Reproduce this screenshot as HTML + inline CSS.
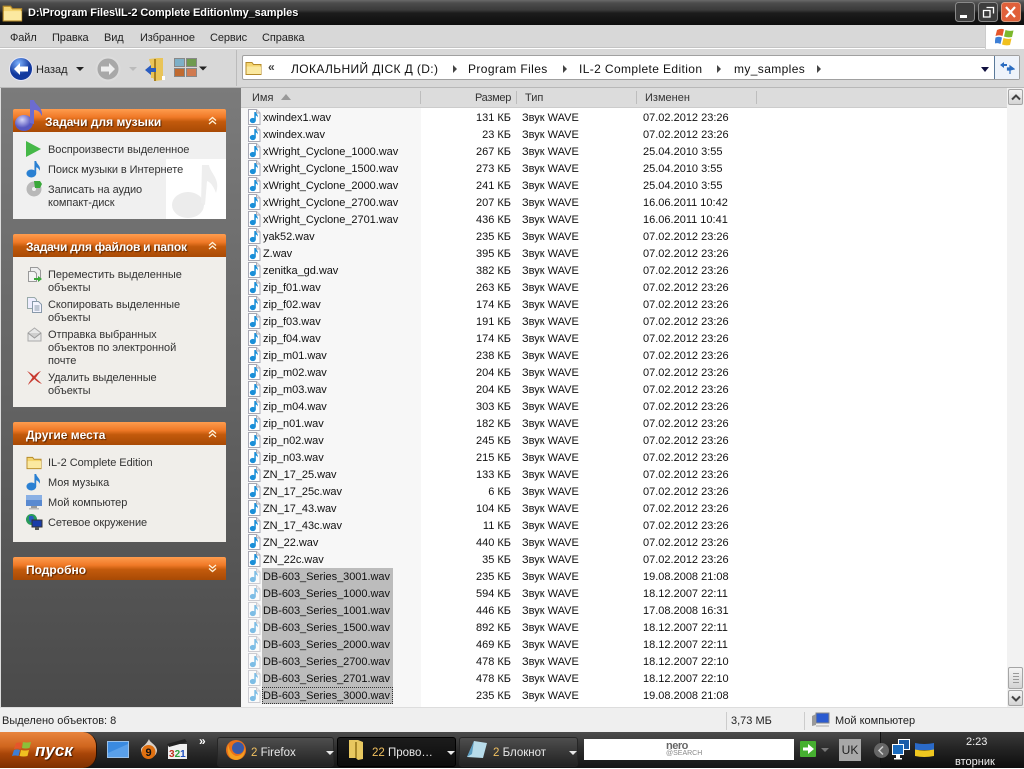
<!DOCTYPE html>
<html><head><meta charset="utf-8"><title>my_samples</title>
<style>
*{box-sizing:border-box}
html,body{margin:0;padding:0;width:1024px;height:768px;overflow:hidden;background:#fff;font:11px "Liberation Sans","DejaVu Sans",sans-serif;color:#111}
.a{position:absolute;white-space:nowrap}
#title{left:0;top:0;width:1024px;height:25px;background:linear-gradient(#6a6a6a 0,#4c4c4c 3px,#3a3a3a 10px,#1c1c1c 13px,#0d0d0d 25px)}
#menu{left:0;top:25px;width:1024px;height:23px;background:#d8d8d8;border-bottom:1px solid #c4c4c4}
#tool{left:0;top:49px;width:1024px;height:39px;background:#d8d8d8;border-bottom:1px solid #b8b8b8}
.m{top:32px;font-size:11px;color:#222;letter-spacing:-.1px}
#addr{left:242px;top:55px;width:778px;height:25px;background:#fff;border:1px solid #a0a0a0;border-radius:2px}
#left{left:1px;top:88px;width:240px;height:619px;background:linear-gradient(#7b7b7b,#4a4a4a)}
.hd{position:absolute;left:13px;width:213px;height:23px;background:linear-gradient(#ff9c4e 0,#f07a28 35%,#c25a0c 55%,#a84a05 100%);border-radius:2px 2px 0 0;color:#fff;font-weight:bold;font-size:12px;line-height:26px;padding-left:13px;text-shadow:1px 1px 1px #5a2500}
.hd svg{position:absolute;right:9px;top:7px}
.bx{position:absolute;left:13px;width:213px;background:#f0eeea}
.t{position:absolute;left:48px;font-size:11px;line-height:13px;color:#333;white-space:nowrap;letter-spacing:-.06px}
.ic{position:absolute}
#ch{left:241px;top:88px;width:766px;height:20px;background:#dcdcdc;border-bottom:1px solid #ccc;color:#333}
#ch span{position:absolute;top:4px}
#ch i{position:absolute;top:3px;width:1px;height:13px;background:#bdbdbd}
#sortc{left:241px;top:108px;width:180px;height:599px;background:#f7f7f7}
#rows{left:241px;top:109px;width:766px;height:598px}
.r{position:relative;height:17px;line-height:17px;color:#111}
.r svg{position:absolute;left:6px;top:0;width:14px;height:16px}
.n,.s,.k,.d{top:1px}
.n{position:absolute;left:21px;padding:0 1px;letter-spacing:-.04px}
.s{position:absolute;right:496px}
.k{position:absolute;left:281px}
.d{position:absolute;left:402px}
.sel{position:absolute;left:21px;width:131px;height:17px;background:#bcbcbc}
.sel.f{border:1px dotted #333}
.r.x svg{opacity:.55}
#sb{left:1007px;top:88px;width:17px;height:619px;background:#f2f2f2}
.sbb{position:absolute;left:1px;width:15px;height:16px;background:linear-gradient(#f4f4f4,#d4d4d4);border:1px solid #a5a5a5;border-radius:2px}
#st{left:0;top:707px;width:1024px;height:25px;background:#efefef;border-top:1px solid #ddd}
#st i{position:absolute;top:4px;width:1px;height:18px;background:#ccc}
#tb{left:0;top:732px;width:1024px;height:36px;background:linear-gradient(#4c4c4c,#2e2e2e 45%,#151515)}
#start{left:0;top:732px;width:97px;height:36px;background:linear-gradient(#e8843e,#d0661e 40%,#a84508 60%,#7e3000);border-radius:0 14px 14px 0;border-right:1px solid #2a1000;color:#fff;font:italic bold 17px "Liberation Sans",sans-serif;line-height:37px;padding-left:35px;text-shadow:1px 1px 1px #3a1500}
.tk{position:absolute;top:737px;height:30px;background:linear-gradient(#4e4e4e,#3a3a3a 45%,#222);border:1px solid #262626;border-radius:3px;color:#e8e8e8;line-height:30px;font-size:11.500px}
.tk.on{background:linear-gradient(#1c1c1c,#0c0c0c);border-color:#000}
.tk em{font-style:normal;color:#f0c060;font-weight:normal}
.tri{position:absolute;width:0;height:0;border-left:4px solid transparent;border-right:4px solid transparent;border-top:4px solid #e8e8e8}
#tray{left:880px;top:732px;width:144px;height:36px;background:linear-gradient(#3a3a3a,#222 50%,#0d0d0d);border-left:1px solid #111}
.ad{top:62px;font-size:12px;letter-spacing:.38px;color:#111}
.ar{top:65px;border-left:4px solid #444;border-top:4px solid transparent;border-bottom:4px solid transparent}
</style></head><body>
<svg width="0" height="0" style="position:absolute"><defs>
<symbol id="wav" viewBox="0 0 14 16"><path d="M1.500.5h8l3.500 3.500v11.500h-11.500z" fill="#fff" stroke="#a9a9b4"/><path d="M9.500.5v3.500h3.500" fill="#e6e6ec" stroke="#a9a9b4"/><ellipse cx="5.800" cy="11.500" rx="3" ry="2.600" fill="#1a8fd8"/><path d="M7.300 3h1.500c.3 1.800 2.500 2.500 2 5.500-.5-1.300-1.200-1.800-2-2v5H7.300z" fill="#1a8fd8"/></symbol>
<symbol id="fold" viewBox="0 0 18 16"><path d="M1 4V2.500h6l1.500 2H16v10H1z" fill="#f4d570" stroke="#b58a2a"/><path d="M1.500 6.500h14.500v7.500H1.500z" fill="#fbe9a0"/></symbol>
<symbol id="note" viewBox="0 0 18 20"><ellipse cx="6" cy="15" rx="5.500" ry="4.500" fill="#2a80d2"/><path d="M9.500 1h2c.5 4 5.500 5 4 11-1-2.500-2.500-3.500-4-4v7h-2z" fill="#2a80d2"/></symbol>
<symbol id="up2" viewBox="0 0 9 9"><path d="M1 4.500l3.500-3 3.500 3M1 8l3.500-3 3.500 3" fill="none" stroke="#fff2d8" stroke-width="1.300"/></symbol>
<symbol id="dn2" viewBox="0 0 9 9"><path d="M1 1l3.500 3 3.500-3M1 4.500l3.500 3 3.500-3" fill="none" stroke="#fff2d8" stroke-width="1.300"/></symbol>
</defs></svg>

<!-- title -->
<div id="title" class="a"></div>
<svg class="a" style="left:2px;top:3px" width="22" height="20"><use href="#fold" width="22" height="20"/></svg>
<div class="a" style="left:28px;top:7px;color:#fff;font-weight:bold;font-size:11px;letter-spacing:-.06px;text-shadow:1px 1px 0 #000">D:\Program Files\IL-2 Complete Edition\my_samples</div>
<svg class="a" style="left:955px;top:2px" width="67" height="21">
<rect x=".5" y=".5" width="19" height="19" rx="3" fill="#3d3d3d" stroke="#8a8a8a"/><rect x="5" y="13" width="7" height="3" fill="#fff"/>
<rect x="23.500" y=".5" width="19" height="19" rx="3" fill="#3d3d3d" stroke="#8a8a8a"/><path d="M31.500 5.500h7v6M28.500 8.500h6.500v6.500h-6.500z" fill="none" stroke="#fff" stroke-width="1.300"/>
<rect x="46.500" y=".5" width="19" height="19" rx="3" fill="#e0603a" stroke="#d89a80"/><path d="M51 5l9 10M60 5l-9 10" stroke="#fff" stroke-width="2.200"/></svg>

<!-- menu -->
<div id="menu" class="a"></div>
<div class="a m" style="left:10px">Файл</div>
<div class="a m" style="left:52px">Правка</div>
<div class="a m" style="left:104px">Вид</div>
<div class="a m" style="left:140px">Избранное</div>
<div class="a m" style="left:210px">Сервис</div>
<div class="a m" style="left:262px">Справка</div>
<div class="a" style="left:985px;top:25px;width:39px;height:24px;background:#fff;border-left:1px solid #ccc"></div>
<svg class="a" style="left:995px;top:27px" width="20" height="19"><path d="M2 3q4-2 7-.5L7.500 9Q4 7.500.5 9z" fill="#e5562a"/><path d="M10.500 3q3.500 1.500 8 .5L17 10q-4 1-8-.5z" fill="#7cb82c"/><path d="M.5 10.500Q4 9 7 10.500L5.500 17Q3 15.500-.5 16.500z" fill="#3d7fd6"/><path d="M8.500 11q4 1.500 8 .5L15 18q-4 1-8-.5z" fill="#f0c020"/></svg>

<!-- toolbar -->
<div id="tool" class="a"></div>
<svg class="a" style="left:8px;top:56px" width="26" height="26"><defs><radialGradient id="bl" cx=".4" cy=".25"><stop offset="0" stop-color="#7fb4ff"/><stop offset="1" stop-color="#12399e"/></radialGradient></defs><circle cx="13" cy="13" r="11.500" fill="url(#bl)" stroke="#e8e8f4"/><path d="M6 13l6-6v3.500h8v5h-8V19z" fill="#fff"/></svg>
<div class="a" style="left:36px;top:64px;color:#222">Назад</div>
<div class="tri" style="left:76px;top:67px;border-top-color:#222"></div>
<svg class="a" style="left:95px;top:56px" width="26" height="26"><circle cx="13" cy="13" r="11.500" fill="#a8a8a8" stroke="#dcdcdc" stroke-width="2"/><path d="M20 13l-6-6v3.500H6v5h8V19z" fill="#eee"/></svg>
<div class="tri" style="left:129px;top:67px;border-top-color:#bbb"></div>
<svg class="a" style="left:143px;top:57px" width="24" height="25"><path d="M6 2l9-1 5 0v22l-8 1-2-3H8V9z" fill="#e9c458"/><path d="M12 2v22" stroke="#a88020" stroke-width="2"/><path d="M2 13l6-5v3h5v4H8v3z" fill="#2a5cc0"/><rect x="19" y="19" width="3" height="4" fill="#fff"/></svg>
<svg class="a" style="left:174px;top:58px" width="34" height="22"><rect x=".5" y=".5" width="10" height="8" fill="#7db0c8" stroke="#888"/><rect x="12.500" y=".5" width="10" height="8" fill="#6f9a50" stroke="#888"/><rect x=".5" y="10.500" width="10" height="8" fill="#c06a30" stroke="#888"/><rect x="12.500" y="10.500" width="10" height="8" fill="#d07a50" stroke="#888"/><path d="M25 8.500h8l-4 4z" fill="#222"/></svg>
<div class="a" style="left:236px;top:50px;width:1px;height:36px;background:#bbb"></div>

<div id="addr" class="a"></div>
<svg class="a" style="left:245px;top:60px" width="18" height="16"><use href="#fold" width="18" height="16"/></svg>
<div class="a" style="left:268px;top:60px;font-size:12px;font-weight:bold;color:#444">«</div>
<div class="a ad" style="left:291px">ЛОКАЛЬНИЙ ДІСК Д (D:)</div>
<div class="a ar" style="left:453px"></div>
<div class="a ad" style="left:468px">Program Files</div>
<div class="a ar" style="left:563px"></div>
<div class="a ad" style="left:579px">IL-2 Complete Edition</div>
<div class="a ar" style="left:717px"></div>
<div class="a ad" style="left:734px">my_samples</div>
<div class="a ar" style="left:817px"></div>
<div class="tri" style="left:981px;top:67px;border-top-color:#111140;border-top-width:5px"></div>
<div class="a" style="left:994px;top:56px;width:25px;height:23px;background:#eef3fa;border-left:1px solid #5a7a9a"></div>
<svg class="a" style="left:999px;top:60px" width="16" height="16"><path d="M1 5l4-3v2h3v2H5v2z" fill="#2a6cc0"/><path d="M15 9l-4-3v2H8.500v2H11v0zM11 9v5" stroke="#2a6cc0" fill="#2a6cc0" stroke-width="1.200"/></svg>

<!-- left pane -->
<div id="left" class="a"></div>
<div class="a" style="left:0;top:88px;width:1px;height:619px;background:#ddd"></div>

<div class="hd" style="top:109px;padding-left:32px">Задачи для музыки<svg width="9" height="9"><use href="#up2"/></svg></div>
<svg class="a" style="left:14px;top:99px" width="32" height="34"><defs><radialGradient id="nt" cx=".4" cy=".3"><stop offset="0" stop-color="#d4d4f8"/><stop offset="1" stop-color="#5858c0"/></radialGradient></defs><ellipse cx="10" cy="24" rx="9" ry="8" fill="url(#nt)"/><path d="M16 1h4c1 5 9 7 8 16-2-4-4-6-8-6v14l-4-1z" fill="#6c6cd0"/></svg>
<div class="bx" style="top:132px;height:87px;background:#f0f0f0">
<div style="position:absolute;left:153px;top:27px;width:60px;height:60px;background:#fff"></div>
<svg style="position:absolute;left:153px;top:27px" width="60" height="60"><ellipse cx="22" cy="46" rx="16" ry="13" fill="#ececec"/><path d="M36 6h7c1 8 12 14 7 28-3-8-6-11-9-12l-2 24-4-2z" fill="#eee"/></svg>
</div>
<svg class="ic" style="left:26px;top:141px" width="15" height="16"><path d="M0 0l15 8L0 16z" fill="#46b848"/></svg>
<div class="t" style="top:144px">Воспроизвести выделенное</div>
<svg class="ic" style="left:26px;top:160px" width="16" height="18"><use href="#note" width="16" height="18"/></svg>
<div class="t" style="top:164px">Поиск музыки в Интернете</div>
<svg class="ic" style="left:26px;top:181px" width="16" height="16"><circle cx="8" cy="8" r="7.500" fill="#b8b8b8"/><circle cx="8" cy="8" r="2" fill="#f0f0f0"/><path d="M8 0h6l2 3-2 4H9z" fill="#3aa83a"/></svg>
<div class="t" style="top:184px">Записать на аудио<br>компакт-диск</div>

<div class="hd" style="top:234px;letter-spacing:-.24px">Задачи для файлов и папок<svg width="9" height="9"><use href="#up2"/></svg></div>
<div class="bx" style="top:257px;height:150px"></div>
<svg class="ic" style="left:27px;top:267px" width="15" height="16"><path d="M3.500.5h7l3 3v9h-10z" fill="#eee" stroke="#999"/><path d="M1.500 4.500h6l2 2v8h-8z" fill="#f4f4f4" stroke="#999"/><path d="M7 11h4V9l4 3-4 3v-2H7z" fill="#3aa83a"/></svg>
<div class="t" style="top:269px">Переместить выделенные<br>объекты</div>
<svg class="ic" style="left:27px;top:297px" width="15" height="16"><path d="M.5.500h7l2 2v9h-9z" fill="#eef" stroke="#9aa"/><path d="M5.500 4.500h6l3 3v8h-9z" fill="#f4f4ff" stroke="#89a"/><path d="M7.500 9h5M7.500 11h5M7.500 13h5" stroke="#89a"/></svg>
<div class="t" style="top:299px">Скопировать выделенные<br>объекты</div>
<svg class="ic" style="left:27px;top:327px" width="15" height="16"><path d="M1 6l6.500-5L14 6v8H1z" fill="#e8e8e8" stroke="#aaa"/><path d="M1 6l6.500 5L14 6" fill="#cfcfcf" stroke="#999"/></svg>
<div class="t" style="top:329px">Отправка выбранных<br>объектов по электронной<br>почте</div>
<svg class="ic" style="left:26px;top:370px" width="16" height="15"><path d="M1 1c4 2 6 4 7 5 2-2 4-4 7-5-2 2-4 5-5.500 7C12 10 14 12 16 14c-3-1-6-3-7.500-5C6 11 4 13 2 15c1-3 3-5 4.500-7.500C4.500 5 3 3 1 1z" fill="#c83a30"/></svg>
<div class="t" style="top:372px">Удалить выделенные<br>объекты</div>

<div class="hd" style="top:422px">Другие места<svg width="9" height="9"><use href="#up2"/></svg></div>
<div class="bx" style="top:445px;height:97px"></div>
<svg class="ic" style="left:26px;top:455px" width="17" height="15"><use href="#fold" width="17" height="15"/></svg>
<div class="t" style="top:457px">IL-2 Complete Edition</div>
<svg class="ic" style="left:26px;top:473px" width="16" height="18"><use href="#note" width="16" height="18"/></svg>
<div class="t" style="top:477px">Моя музыка</div>
<svg class="ic" style="left:26px;top:495px" width="16" height="15"><rect x="0" y="0" width="16" height="11" fill="#5a8ad0"/><rect x="0" y="0" width="16" height="5" fill="#8ab0e4"/><rect x="5" y="11" width="6" height="2" fill="#999"/><rect x="3" y="13" width="10" height="1.500" fill="#bbb"/></svg>
<div class="t" style="top:497px">Мой компьютер</div>
<svg class="ic" style="left:26px;top:514px" width="17" height="17"><circle cx="5.500" cy="5.500" r="5.500" fill="#2a9a5a"/><path d="M3 2l4 0 1 3-3 4-2-3z" fill="#2a5cc0"/><rect x="6" y="6" width="10" height="7" fill="#1a3ca8" stroke="#333"/><rect x="9" y="13" width="4" height="3" fill="#555"/></svg>
<div class="t" style="top:517px">Сетевое окружение</div>

<div class="hd" style="top:557px">Подробно<svg width="9" height="9"><use href="#dn2"/></svg></div>

<!-- list -->
<div id="ch" class="a"><span style="left:11px">Имя</span><svg style="position:absolute;left:40px;top:6px" width="10" height="6"><path d="M0 6L5 0l5 6z" fill="#999"/></svg><i style="left:179px"></i><span style="left:234px;letter-spacing:-.3px">Размер</span><i style="left:275px"></i><span style="left:284px">Тип</span><i style="left:395px"></i><span style="left:404px">Изменен</span><i style="left:515px"></i></div>
<div id="sortc" class="a"></div>
<div id="rows" class="a">
<div class="r"><svg><use href="#wav"/></svg><span class="n">xwindex1.wav</span><span class="s">131 КБ</span><span class="k">Звук WAVE</span><span class="d">07.02.2012 23:26</span></div>
<div class="r"><svg><use href="#wav"/></svg><span class="n">xwindex.wav</span><span class="s">23 КБ</span><span class="k">Звук WAVE</span><span class="d">07.02.2012 23:26</span></div>
<div class="r"><svg><use href="#wav"/></svg><span class="n">xWright_Cyclone_1000.wav</span><span class="s">267 КБ</span><span class="k">Звук WAVE</span><span class="d">25.04.2010 3:55</span></div>
<div class="r"><svg><use href="#wav"/></svg><span class="n">xWright_Cyclone_1500.wav</span><span class="s">273 КБ</span><span class="k">Звук WAVE</span><span class="d">25.04.2010 3:55</span></div>
<div class="r"><svg><use href="#wav"/></svg><span class="n">xWright_Cyclone_2000.wav</span><span class="s">241 КБ</span><span class="k">Звук WAVE</span><span class="d">25.04.2010 3:55</span></div>
<div class="r"><svg><use href="#wav"/></svg><span class="n">xWright_Cyclone_2700.wav</span><span class="s">207 КБ</span><span class="k">Звук WAVE</span><span class="d">16.06.2011 10:42</span></div>
<div class="r"><svg><use href="#wav"/></svg><span class="n">xWright_Cyclone_2701.wav</span><span class="s">436 КБ</span><span class="k">Звук WAVE</span><span class="d">16.06.2011 10:41</span></div>
<div class="r"><svg><use href="#wav"/></svg><span class="n">yak52.wav</span><span class="s">235 КБ</span><span class="k">Звук WAVE</span><span class="d">07.02.2012 23:26</span></div>
<div class="r"><svg><use href="#wav"/></svg><span class="n">Z.wav</span><span class="s">395 КБ</span><span class="k">Звук WAVE</span><span class="d">07.02.2012 23:26</span></div>
<div class="r"><svg><use href="#wav"/></svg><span class="n">zenitka_gd.wav</span><span class="s">382 КБ</span><span class="k">Звук WAVE</span><span class="d">07.02.2012 23:26</span></div>
<div class="r"><svg><use href="#wav"/></svg><span class="n">zip_f01.wav</span><span class="s">263 КБ</span><span class="k">Звук WAVE</span><span class="d">07.02.2012 23:26</span></div>
<div class="r"><svg><use href="#wav"/></svg><span class="n">zip_f02.wav</span><span class="s">174 КБ</span><span class="k">Звук WAVE</span><span class="d">07.02.2012 23:26</span></div>
<div class="r"><svg><use href="#wav"/></svg><span class="n">zip_f03.wav</span><span class="s">191 КБ</span><span class="k">Звук WAVE</span><span class="d">07.02.2012 23:26</span></div>
<div class="r"><svg><use href="#wav"/></svg><span class="n">zip_f04.wav</span><span class="s">174 КБ</span><span class="k">Звук WAVE</span><span class="d">07.02.2012 23:26</span></div>
<div class="r"><svg><use href="#wav"/></svg><span class="n">zip_m01.wav</span><span class="s">238 КБ</span><span class="k">Звук WAVE</span><span class="d">07.02.2012 23:26</span></div>
<div class="r"><svg><use href="#wav"/></svg><span class="n">zip_m02.wav</span><span class="s">204 КБ</span><span class="k">Звук WAVE</span><span class="d">07.02.2012 23:26</span></div>
<div class="r"><svg><use href="#wav"/></svg><span class="n">zip_m03.wav</span><span class="s">204 КБ</span><span class="k">Звук WAVE</span><span class="d">07.02.2012 23:26</span></div>
<div class="r"><svg><use href="#wav"/></svg><span class="n">zip_m04.wav</span><span class="s">303 КБ</span><span class="k">Звук WAVE</span><span class="d">07.02.2012 23:26</span></div>
<div class="r"><svg><use href="#wav"/></svg><span class="n">zip_n01.wav</span><span class="s">182 КБ</span><span class="k">Звук WAVE</span><span class="d">07.02.2012 23:26</span></div>
<div class="r"><svg><use href="#wav"/></svg><span class="n">zip_n02.wav</span><span class="s">245 КБ</span><span class="k">Звук WAVE</span><span class="d">07.02.2012 23:26</span></div>
<div class="r"><svg><use href="#wav"/></svg><span class="n">zip_n03.wav</span><span class="s">215 КБ</span><span class="k">Звук WAVE</span><span class="d">07.02.2012 23:26</span></div>
<div class="r"><svg><use href="#wav"/></svg><span class="n">ZN_17_25.wav</span><span class="s">133 КБ</span><span class="k">Звук WAVE</span><span class="d">07.02.2012 23:26</span></div>
<div class="r"><svg><use href="#wav"/></svg><span class="n">ZN_17_25c.wav</span><span class="s">6 КБ</span><span class="k">Звук WAVE</span><span class="d">07.02.2012 23:26</span></div>
<div class="r"><svg><use href="#wav"/></svg><span class="n">ZN_17_43.wav</span><span class="s">104 КБ</span><span class="k">Звук WAVE</span><span class="d">07.02.2012 23:26</span></div>
<div class="r"><svg><use href="#wav"/></svg><span class="n">ZN_17_43c.wav</span><span class="s">11 КБ</span><span class="k">Звук WAVE</span><span class="d">07.02.2012 23:26</span></div>
<div class="r"><svg><use href="#wav"/></svg><span class="n">ZN_22.wav</span><span class="s">440 КБ</span><span class="k">Звук WAVE</span><span class="d">07.02.2012 23:26</span></div>
<div class="r"><svg><use href="#wav"/></svg><span class="n">ZN_22c.wav</span><span class="s">35 КБ</span><span class="k">Звук WAVE</span><span class="d">07.02.2012 23:26</span></div>
<div class="r x"><i class="sel"></i><svg><use href="#wav"/></svg><span class="n">DB-603_Series_3001.wav</span><span class="s">235 КБ</span><span class="k">Звук WAVE</span><span class="d">19.08.2008 21:08</span></div>
<div class="r x"><i class="sel"></i><svg><use href="#wav"/></svg><span class="n">DB-603_Series_1000.wav</span><span class="s">594 КБ</span><span class="k">Звук WAVE</span><span class="d">18.12.2007 22:11</span></div>
<div class="r x"><i class="sel"></i><svg><use href="#wav"/></svg><span class="n">DB-603_Series_1001.wav</span><span class="s">446 КБ</span><span class="k">Звук WAVE</span><span class="d">17.08.2008 16:31</span></div>
<div class="r x"><i class="sel"></i><svg><use href="#wav"/></svg><span class="n">DB-603_Series_1500.wav</span><span class="s">892 КБ</span><span class="k">Звук WAVE</span><span class="d">18.12.2007 22:11</span></div>
<div class="r x"><i class="sel"></i><svg><use href="#wav"/></svg><span class="n">DB-603_Series_2000.wav</span><span class="s">469 КБ</span><span class="k">Звук WAVE</span><span class="d">18.12.2007 22:11</span></div>
<div class="r x"><i class="sel"></i><svg><use href="#wav"/></svg><span class="n">DB-603_Series_2700.wav</span><span class="s">478 КБ</span><span class="k">Звук WAVE</span><span class="d">18.12.2007 22:10</span></div>
<div class="r x"><i class="sel"></i><svg><use href="#wav"/></svg><span class="n">DB-603_Series_2701.wav</span><span class="s">478 КБ</span><span class="k">Звук WAVE</span><span class="d">18.12.2007 22:10</span></div>
<div class="r x"><i class="sel f"></i><svg><use href="#wav"/></svg><span class="n">DB-603_Series_3000.wav</span><span class="s">235 КБ</span><span class="k">Звук WAVE</span><span class="d">19.08.2008 21:08</span></div>
</div>

<!-- scrollbar -->
<div id="sb" class="a">
<div class="sbb" style="top:1px"></div>
<svg style="position:absolute;left:4px;top:6px" width="10" height="7"><path d="M1 5.500l4-4 4 4" fill="none" stroke="#444" stroke-width="2"/></svg>
<div class="sbb" style="top:579px;height:22px"></div>
<svg style="position:absolute;left:5px;top:584px" width="8" height="12"><path d="M1 1.500h6M1 4.500h6M1 7.500h6M1 10.500h6" stroke="#999"/></svg>
<div class="sbb" style="top:602px"></div>
<svg style="position:absolute;left:4px;top:607px" width="10" height="7"><path d="M1 1.500l4 4 4-4" fill="none" stroke="#444" stroke-width="2"/></svg>
</div>

<!-- status -->
<div id="st" class="a"><i style="left:726px"></i><i style="left:804px"></i>
<span style="position:absolute;left:2px;top:7px;color:#222">Выделено объектов: 8</span>
<span style="position:absolute;left:731px;top:7px;color:#222">3,73 МБ</span>
<svg style="position:absolute;left:812px;top:4px" width="18" height="16"><rect x="4" y="1" width="13" height="10" fill="#2a5ad0" stroke="#888"/><path d="M0 4l4-2v11l-4 1z" fill="#999"/><path d="M4 13h13v2H4z" fill="#ccc"/></svg>
<span style="position:absolute;left:835px;top:7px;color:#222">Мой компьютер</span></div>

<!-- taskbar -->
<div id="tb" class="a"></div>
<div id="start" class="a">пуск</div>
<svg class="a" style="left:11px;top:741px" width="21" height="18"><path d="M5 2q4-1 6 0L9.500 8Q7 7 3 8z" fill="#e5562a"/><path d="M12 1q3 1 8 0l-1.500 6q-4 1-7.500 0z" fill="#8cc03a"/><path d="M3 9q3-1 6 0L7.500 15Q4 14 1 15z" fill="#3d7fd6"/><path d="M10 9q4 1 8 0l-1.500 6q-4 1-8 0z" fill="#f0c020"/></svg>
<svg class="a" style="left:107px;top:741px" width="23" height="18"><rect x=".5" y=".5" width="21" height="16" fill="#3a8ae0" stroke="#9ac0e8"/><path d="M1 12L21 3v13H1z" fill="#5aa0ea"/></svg>
<svg class="a" style="left:139px;top:739px" width="20" height="22"><path d="M10 0c1 4 7 5 8 11a8 8 0 0 1-16 0C2 7 6 8 10 0z" fill="#d8d0c8"/><circle cx="9.500" cy="13" r="7" fill="#e07010"/><text x="6.500" y="17" font-family="Liberation Sans" font-weight="bold" font-size="11" fill="#111">9</text></svg>
<svg class="a" style="left:167px;top:739px" width="21" height="21"><rect x="1" y="5" width="19" height="15" fill="#f0f0f0"/><path d="M0 5l18-5 2 3L2 8z" fill="#222"/><text x="2" y="18" font-family="Liberation Sans" font-weight="bold" font-size="10" fill="#c03020">3<tspan fill="#30a040">2</tspan><tspan fill="#2050c0">1</tspan></text></svg>
<div class="a" style="left:199px;top:734px;color:#fff;font-weight:bold;font-size:12px">»</div>

<div class="tk" style="left:217px;width:117px;padding-left:33px"><em>2</em> Firefox<div class="tri" style="left:108px;top:13px"></div></div>
<svg class="a" style="left:225px;top:739px" width="22" height="22"><circle cx="11" cy="11" r="10" fill="#e8701a"/><circle cx="13" cy="9" r="6" fill="#3a5aa8"/><path d="M3 5q2 10 8 12 7 0 9-8 0 11-9 12Q1 20 3 5z" fill="#f4a020"/></svg>
<div class="tk on" style="left:337px;width:119px;padding-left:34px"><em>22</em> Прово…<div class="tri" style="left:109px;top:13px"></div></div>
<svg class="a" style="left:348px;top:739px" width="17" height="23"><path d="M1 1h9l5 2v17l-5 1-2-2H1z" fill="#e8c860"/><path d="M8 3v16" stroke="#a8882a" stroke-width="2"/></svg>
<div class="tk" style="left:459px;width:119px;padding-left:33px"><em>2</em> Блокнот<div class="tri" style="left:109px;top:13px"></div></div>
<svg class="a" style="left:467px;top:740px" width="21" height="19"><path d="M7 1l13 2-4 15-16-1z" fill="#b8dcea"/><path d="M7 1L0 17l5-3z" fill="#5a9cc0"/></svg>

<div class="a" style="left:584px;top:739px;width:210px;height:21px;background:#fff"></div>
<div class="a" style="left:666px;top:740px;font-size:11px;font-weight:bold;color:#666;letter-spacing:-.5px">nero</div>
<div class="a" style="left:666px;top:750px;font-size:7px;color:#888">@SEARCH</div>
<svg class="a" style="left:800px;top:741px" width="17" height="17"><rect width="16" height="16" rx="1" fill="#46b030"/><path d="M3 6.500h5V3l6 5-6 5V9.500H3z" fill="#fff"/></svg>
<div class="tri" style="left:821px;top:748px;border-top-color:#777"></div>
<div class="a" style="left:839px;top:739px;width:22px;height:22px;background:#a8a8a8;color:#222;font-size:12px;text-align:center;line-height:22px">UK</div>

<div id="tray" class="a"></div>
<svg class="a" style="left:873px;top:742px" width="17" height="17"><circle cx="8.500" cy="8.500" r="7.500" fill="#666"/><path d="M10 4.500l-4 4 4 4" fill="none" stroke="#ccc" stroke-width="1.500"/></svg>
<svg class="a" style="left:892px;top:739px" width="18" height="22"><rect x="6.500" y=".5" width="11" height="10" fill="#1a5ca8" stroke="#fff"/><rect x=".5" y="5.500" width="11" height="10" fill="#1a6cc0" stroke="#fff"/><rect x="4" y="16" width="4" height="3" fill="#fff"/><rect x="2" y="19" width="8" height="1.500" fill="#fff"/></svg>
<svg class="a" style="left:915px;top:742px" width="19" height="15"><path d="M0 1q9 2 19 0v7H0z" fill="#2a6ac8"/><path d="M0 7.500q9 2 19 0V14q-10 2-19 0z" fill="#f0c820"/></svg>
<div class="a" style="left:966px;top:736px;color:#eee;font-size:11px">2:23</div>
<div class="a" style="left:955px;top:756px;color:#eee;font-size:11px">вторник</div>
</body></html>
